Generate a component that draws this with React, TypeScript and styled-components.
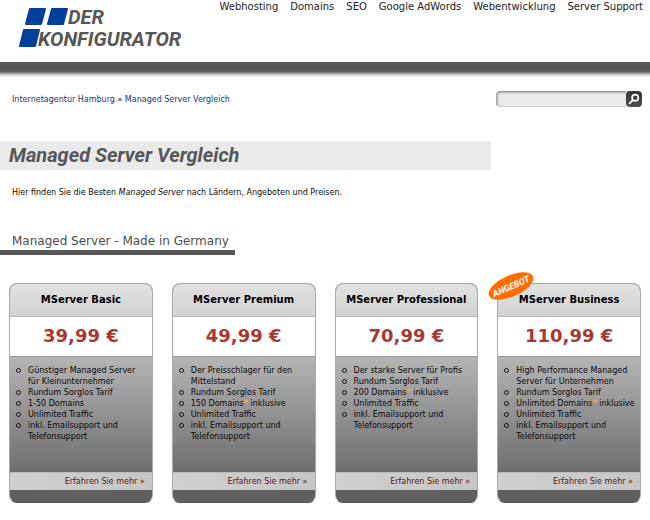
import React from "react";
import styled, { createGlobalStyle } from "styled-components";

const display = 'Roboto, "Liberation Sans", sans-serif';

const GlobalStyle = createGlobalStyle`
  *, *::before { box-sizing: border-box; }
  body {
    margin: 0;
    background: #fff;
    color: #0a0a0a;
    font: 8px/11px "DejaVu Sans", Verdana, sans-serif;
  }
  h1, h2, h3, p, ul { margin: 0; padding: 0; font-weight: normal; }
  a { color: inherit; text-decoration: none; }
`;

const Header = styled.header`
  display: flex;
  justify-content: space-between;
  align-items: flex-start;
  height: 62px;
  padding: 0 7px 0 18px;
`;

const Logo = styled.a`
  display: block;
  padding-top: 6px;
  svg { display: block; }
`;

const Nav = styled.nav`
  display: flex;
  gap: 12px;
  font-size: 10px;
  line-height: 14px;
  color: #222;
  white-space: nowrap;
`;

const Divider = styled.div`
  height: 15px;
  background: linear-gradient(#575757 0 9px, #6b6b6b 10px, #b5b5b5 12px, #ececec 14px, #fff 15px);
`;

const TopRow = styled.div`
  display: flex;
  justify-content: space-between;
  align-items: center;
  padding: 14px 8px 0 12px;
`;

const Breadcrumb = styled.nav`
  color: #222;
  a { color: #12357f; }
`;

const Search = styled.form`
  display: flex;
  width: 146px;
  height: 16px;
`;

const SearchInput = styled.input`
  flex: 1;
  min-width: 0;
  padding: 0 5px;
  border: 1px solid #d0d0d0;
  border-top-color: #999;
  border-left-color: #aaa;
  border-right: 0;
  border-radius: 4px 0 0 4px;
  background: #ebebeb;
  box-shadow: inset 1px 1px 2px #aaa;
  font: inherit;
  outline: none;
`;

const SearchButton = styled.button`
  display: grid;
  place-items: center;
  width: 16px;
  padding: 0;
  border: 0;
  border-radius: 4px;
  background: linear-gradient(#333, #505050);
  cursor: pointer;
`;

const PageTitle = styled.h1`
  width: calc(100% - 159px);
  margin-top: 34px;
  padding-left: 9px;
  background: #eaeaea;
  color: #575757;
  font: italic bold 20px/29px ${display};
`;

const Intro = styled.p`
  padding: 17px 12px 0;
`;

const SectionTitle = styled.h2`
  width: fit-content;
  margin-top: 36px;
  padding: 0 6px 2px 12px;
  border-bottom: 5px solid #575757;
  color: #4c4c4c;
  font-size: 12px;
  line-height: 14px;
`;

const Plans = styled.section`
  display: grid;
  grid-template-columns: repeat(4, 1fr);
  gap: 19px;
  padding: 28px 9px 16px;
`;

const Card = styled.article`
  position: relative;
  display: flex;
  flex-direction: column;
  border: 1px solid #aaa;
  border-bottom-color: #555;
  border-radius: 8px;
  background: linear-gradient(#555, #606060);
`;

const PlanName = styled.h3`
  border-bottom: 1px solid #b5b5b5;
  border-radius: 7px 7px 0 0;
  background: linear-gradient(#e2e2e2, #d2d2d2);
  color: #000;
  font-size: 10px;
  font-weight: bold;
  line-height: 32px;
  text-align: center;
`;

const Price = styled.p`
  border-bottom: 1px solid #999;
  background: #fff;
  color: #a93830;
  font-size: 18px;
  font-weight: bold;
  line-height: 38px;
  padding-bottom: 1px;
  text-align: center;
`;

const Features = styled.ul`
  flex: 1;
  min-height: 115px;
  padding: 8px 4px 8px 18px;
  background: linear-gradient(#b5b5b5, #6e6e6e);
  list-style: none;
`;

const Feature = styled.li`
  position: relative;
  &::before {
    content: "";
    position: absolute;
    left: -12px;
    top: 3px;
    width: 5px;
    height: 5px;
    border: 1px solid #111;
    border-radius: 50%;
  }
`;

const Star = styled.span`
  color: #ffa51e;
  font-weight: bold;
`;

const More = styled.a`
  padding-right: 7px;
  border-top: 1px solid #bbb;
  background: linear-gradient(90deg, #d0d0d0, #c6c6c6);
  && { color: #581818; }
  line-height: 17px;
  text-align: right;
`;

const Foot = styled.div`
  height: 12px;
`;

const Badge = styled.svg`
  position: absolute;
  left: -11px;
  top: -15px;
`;

type Plan = { name: string; price: string; features: string[]; offer?: boolean };

const plans: Plan[] = [
  {
    name: "MServer Basic",
    price: "39,99 €",
    features: ["Günstiger Managed Server für Kleinunternehmer", "Rundum Sorglos Tarif", "1-50 Domains", "Unlimited Traffic", "inkl. Emailsupport und Telefonsupport"],
  },
  {
    name: "MServer Premium",
    price: "49,99 €",
    features: ["Der Preisschlager für den Mittelstand", "Rundum Sorglos Tarif", "150 Domains* inklusive", "Unlimited Traffic", "inkl. Emailsupport und Telefonsupport"],
  },
  {
    name: "MServer Professional",
    price: "70,99 €",
    features: ["Der starke Server für Profis", "Rundum Sorglos Tarif", "200 Domains* inklusive", "Unlimited Traffic", "inkl. Emailsupport und Telefonsupport"],
  },
  {
    name: "MServer Business",
    price: "110,99 €",
    offer: true,
    features: ["High Performance Managed Server für Unternehmen", "Rundum Sorglos Tarif", "Unlimited Domains* inklusive", "Unlimited Traffic", "inkl. Emailsupport und Telefonsupport"],
  },
];

const links = ["Webhosting", "Domains", "SEO", "Google AdWords", "Webentwicklung", "Server Support"];

function FeatureText({ text }: { text: string }) {
  const [before, after] = text.split("*");
  return after === undefined ? <>{before}</> : <>{before}<Star>*</Star>{after}</>;
}

function PlanCard({ plan }: { plan: Plan }) {
  return (
    <Card>
      <PlanName>{plan.name}</PlanName>
      <Price>{plan.price}</Price>
      <Features>
        {plan.features.map((f) => (
          <Feature key={f}><FeatureText text={f} /></Feature>
        ))}
      </Features>
      <More href="#">Erfahren Sie mehr »</More>
      <Foot />
      {plan.offer && (
        <Badge width="48" height="34" viewBox="0 0 48 34">
          <g transform="rotate(-24 24 17)">
            <ellipse cx="24" cy="17" rx="24" ry="10.5" fill="#ff6d00" />
            <text x="24" y="20.5" textAnchor="middle" fill="#fff" fontFamily={display} fontStyle="italic" fontWeight="bold" fontSize="9">ANGEBOT</text>
          </g>
        </Badge>
      )}
    </Card>
  );
}

export default function App() {
  return (
    <>
      <GlobalStyle />
      <Header>
        <Logo href="#" aria-label="Der Konfigurator">
          <svg width="168" height="44" viewBox="18 6 168 44">
            <g fill="#00409a" stroke="#00409a" strokeWidth="2" strokeLinejoin="round">
              <path d="M30 9H45L41 24H26Z" />
              <path d="M52 9H67L63 24H48Z" />
              <path d="M24 30H39L35 46H20Z" />
            </g>
            <g fill="#575757" fontFamily={display} fontStyle="italic" fontWeight="bold" fontSize="20">
              <text x="68" y="24">DER</text>
              <text x="38" y="46">KONFIGURATOR</text>
            </g>
          </svg>
        </Logo>
        <Nav>{links.map((l) => <a href="#" key={l}>{l}</a>)}</Nav>
      </Header>
      <Divider />
      <main>
        <TopRow>
          <Breadcrumb>
            <a href="#">Internetagentur Hamburg</a> » <a href="#">Managed Server Vergleich</a>
          </Breadcrumb>
          <Search>
            <SearchInput type="search" aria-label="Suche" />
            <SearchButton type="button" aria-label="Suchen">
              <svg width="12" height="12" viewBox="0 0 12 12" fill="none" stroke="#fff" strokeWidth="1.7">
                <circle cx="7.2" cy="4.8" r="3.1" />
                <path d="M4.8 7.2L1.6 10.4" strokeLinecap="round" />
              </svg>
            </SearchButton>
          </Search>
        </TopRow>
        <PageTitle>Managed Server Vergleich</PageTitle>
        <Intro>
          Hier finden Sie die Besten <em>Managed Server</em> nach Ländern, Angeboten und Preisen.
        </Intro>
        <SectionTitle>Managed Server - Made in Germany</SectionTitle>
        <Plans>{plans.map((p) => <PlanCard key={p.name} plan={p} />)}</Plans>
      </main>
    </>
  );
}
